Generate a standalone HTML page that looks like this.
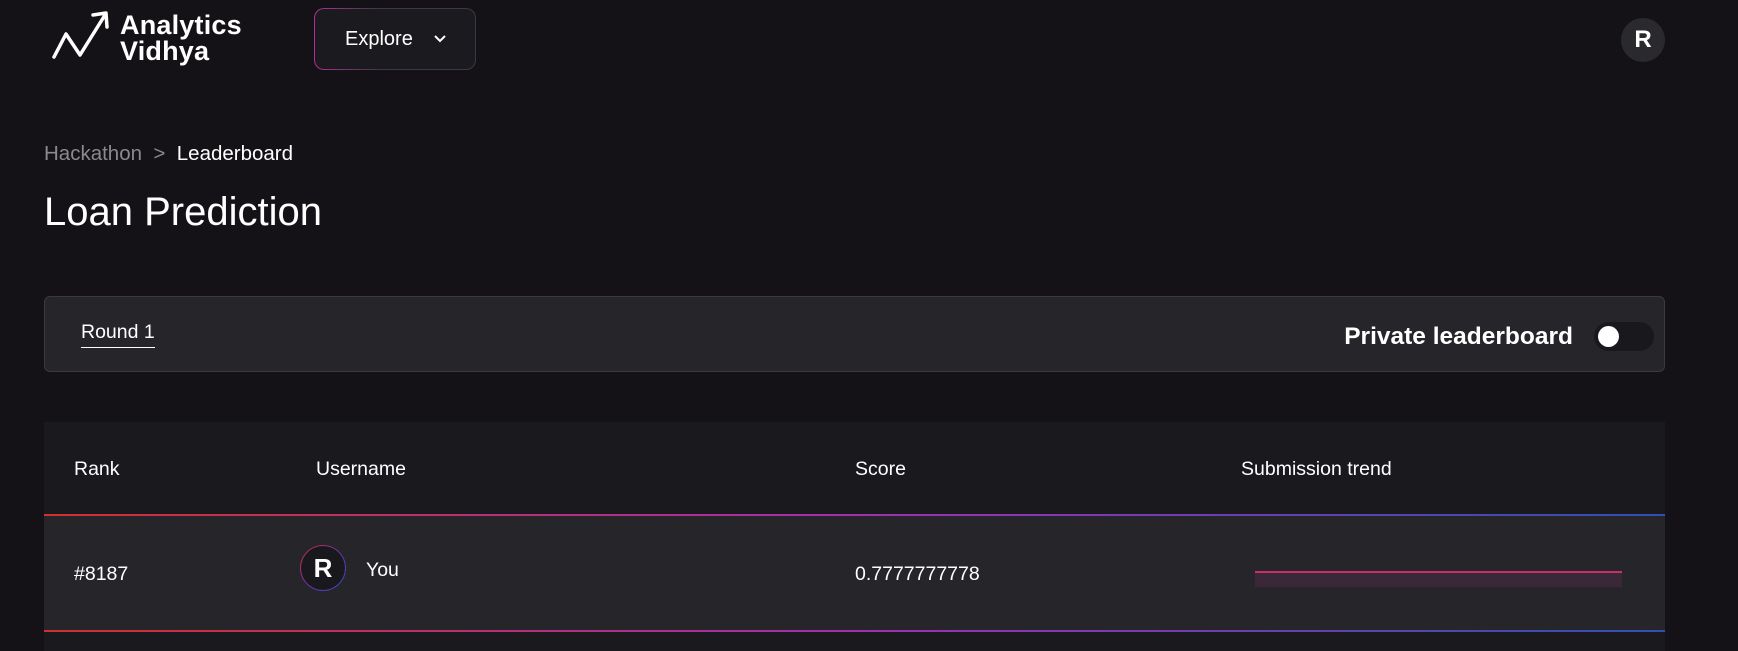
<!DOCTYPE html>
<html><head><style>
*{margin:0;padding:0;box-sizing:border-box}
body{width:1738px;height:651px;background:#141216;font-family:"Liberation Sans",sans-serif;color:#fff;position:relative;overflow:hidden}
.a{position:absolute;white-space:nowrap}
</style></head><body>
<svg class="a" style="left:0;top:0" width="130" height="70"><path d="M54 57 L66 34 L80 55 L105 15 M93 15 L106 13 L107 27" stroke="#fff" stroke-width="3.5" fill="none" stroke-linecap="round" stroke-linejoin="round"/></svg>
<div class="a" style="left:120px;top:12px;font-size:27px;line-height:26px;font-weight:bold;letter-spacing:0.2px">Analytics<br>Vidhya</div>
<div class="a" style="left:314px;top:8px;width:162px;height:62px;border-radius:10px;padding:1px;background:linear-gradient(90deg,#b0309a 0%,#3a3a44 40%,#3a3a44 100%)"><div style="width:100%;height:100%;border-radius:9px;background:#1b1a1e;display:flex;align-items:center;padding-left:30px;font-size:20px">Explore<svg style="margin-left:20px" width="14" height="10"><path d="M2 2 L7 7 L12 2" stroke="#fff" stroke-width="2" fill="none"/></svg></div></div>
<div class="a" style="left:1621px;top:18px;width:44px;height:44px;border-radius:50%;background:#2a292e;text-align:center;line-height:44px;font-size:24px;font-weight:bold">R</div>
<div class="a" style="left:44px;top:142px;font-size:20.5px;color:#8a898e">Hackathon &nbsp;&gt;&nbsp; <span style="color:#fff">Leaderboard</span></div>
<div class="a" style="left:44px;top:190px;font-size:40px">Loan Prediction</div>
<div class="a" style="left:44px;top:296px;width:1621px;height:76px;background:#262529;border:1px solid #3a393d;border-radius:6px"></div>
<div class="a" style="left:81px;top:321px;font-size:19.5px;border-bottom:1.5px solid #fff;padding-bottom:3px">Round 1</div>
<div class="a" style="right:165px;top:323px;font-size:24.5px;font-weight:bold">Private leaderboard</div>
<div class="a" style="left:1594px;top:322px;width:60px;height:29px;border-radius:15px;background:#19181c"><div style="position:absolute;left:4px;top:4px;width:21px;height:21px;border-radius:50%;background:#fff"></div></div>
<div class="a" style="left:44px;top:422px;width:1621px;height:92px;background:#1a191d"></div>
<div class="a" style="left:44px;top:514px;width:1621px;height:2px;background:linear-gradient(90deg,#d03030,#a030b0 50%,#3050b0)"></div>
<div class="a" style="left:44px;top:516px;width:1621px;height:115px;background:#262529"></div>
<div class="a" style="left:44px;top:630px;width:1621px;height:2px;background:linear-gradient(90deg,#d03030,#a030b0 50%,#3050b0)"></div>
<div class="a" style="left:44px;top:632px;width:1621px;height:19px;background:#1a191d"></div>
<div class="a" style="left:74px;top:458px;font-size:19.5px">Rank</div>
<div class="a" style="left:316px;top:458px;font-size:19.5px">Username</div>
<div class="a" style="left:855px;top:458px;font-size:19.5px">Score</div>
<div class="a" style="left:1241px;top:458px;font-size:19.5px">Submission trend</div>
<div class="a" style="left:74px;top:563px;font-size:19.5px">#8187</div>
<div class="a" style="left:300px;top:545px;width:46px;height:46px;border-radius:50%;padding:1px;background:linear-gradient(135deg,#d03030,#7030b0,#3050c0)"><div style="width:100%;height:100%;border-radius:50%;background:#19181c;text-align:center;line-height:44px;font-size:26px;font-weight:bold">R</div></div>
<div class="a" style="left:366px;top:559px;font-size:19.5px">You</div>
<div class="a" style="left:855px;top:563px;font-size:19.5px">0.7777777778</div>
<div class="a" style="left:1255px;top:571px;width:367px;height:16px;background:#3a2737;border-top:2px solid #c8306a"></div>
</body></html>
